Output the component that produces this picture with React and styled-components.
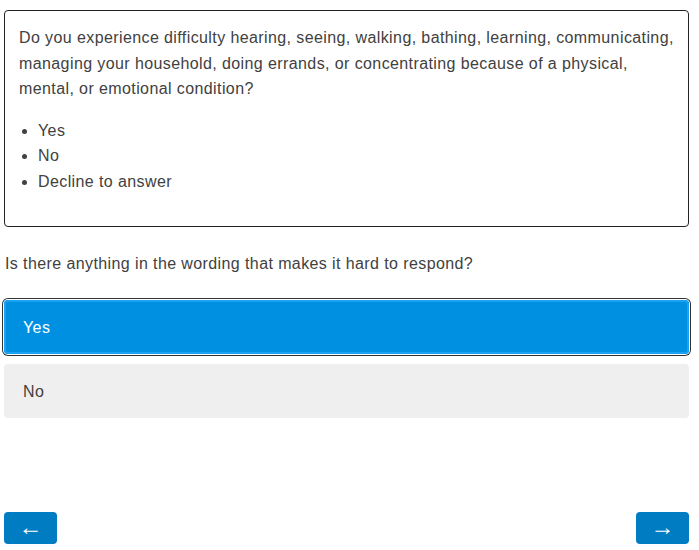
import React from "react";
import styled, { createGlobalStyle } from "styled-components";

const Global = createGlobalStyle`
  html, body { margin: 0; padding: 0; background: #fff; }
  body { font-family: "Liberation Sans", Arial, sans-serif; color: #414141; letter-spacing: 0.4px; }
  * { box-sizing: border-box; }
`;

const Page = styled.div`
  height: 100vh;
  display: flex;
  flex-direction: column;
  padding: 10px 10px 6px 4px;
`;

const Card = styled.div`
  border: 1px solid #222;
  border-radius: 4px;
  padding: 14px 14px 15px;
  font-size: 16px;
  line-height: 25.6px;
`;

const Para = styled.p`
  margin: 0 0 16px;
`;

const List = styled.ul`
  margin: 0 0 16px;
  padding-left: 19px;
`;

const Question = styled.p`
  margin: 24px 0 24px 1px;
  font-size: 16px;
  line-height: 25.6px;
`;

const Options = styled.div`
  display: flex;
  flex-direction: column;
  gap: 10px;
`;

const Option = styled.button`
  height: 54px;
  border: none;
  border-radius: 4px;
  padding: 1px 19px 0;
  text-align: left;
  font-family: "Liberation Sans", Arial, sans-serif;
  letter-spacing: 0.4px;
  font-size: 16px;
  background: ${(p) => (p.$selected ? "#0090e2" : "#efefef")};
  color: ${(p) => (p.$selected ? "#fff" : "#414141")};
  box-shadow: ${(p) =>
    p.$selected
      ? "inset 0 0 0 2px #19a2f2, 0 0 0 1px #fff, 0 0 0 2px #333"
      : "none"};
  cursor: pointer;
`;

const Nav = styled.div`
  margin-top: auto;
  display: flex;
  justify-content: space-between;
`;

const NavButton = styled.button`
  width: 53px;
  height: 32px;
  border: none;
  border-radius: 4px;
  background: #007cc3;
  color: #fff;
  font-family: "Liberation Sans", sans-serif;
  font-size: 24px;
  line-height: 1;
  display: flex;
  align-items: center;
  justify-content: center;
  padding: 0 0 2px;
`;

export default function App() {
  return (
    <>
      <Global />
      <Page>
        <Card>
          <Para>
            Do you experience difficulty hearing, seeing, walking, bathing,
            learning, communicating, managing your household, doing errands, or
            concentrating because of a physical, mental, or emotional condition?
          </Para>
          <List>
            <li>Yes</li>
            <li>No</li>
            <li>Decline to answer</li>
          </List>
        </Card>
        <Question>
          Is there anything in the wording that makes it hard to respond?
        </Question>
        <Options>
          <Option $selected>Yes</Option>
          <Option>No</Option>
        </Options>
        <Nav>
          <NavButton aria-label="Back">←</NavButton>
          <NavButton aria-label="Next">→</NavButton>
        </Nav>
      </Page>
    </>
  );
}
